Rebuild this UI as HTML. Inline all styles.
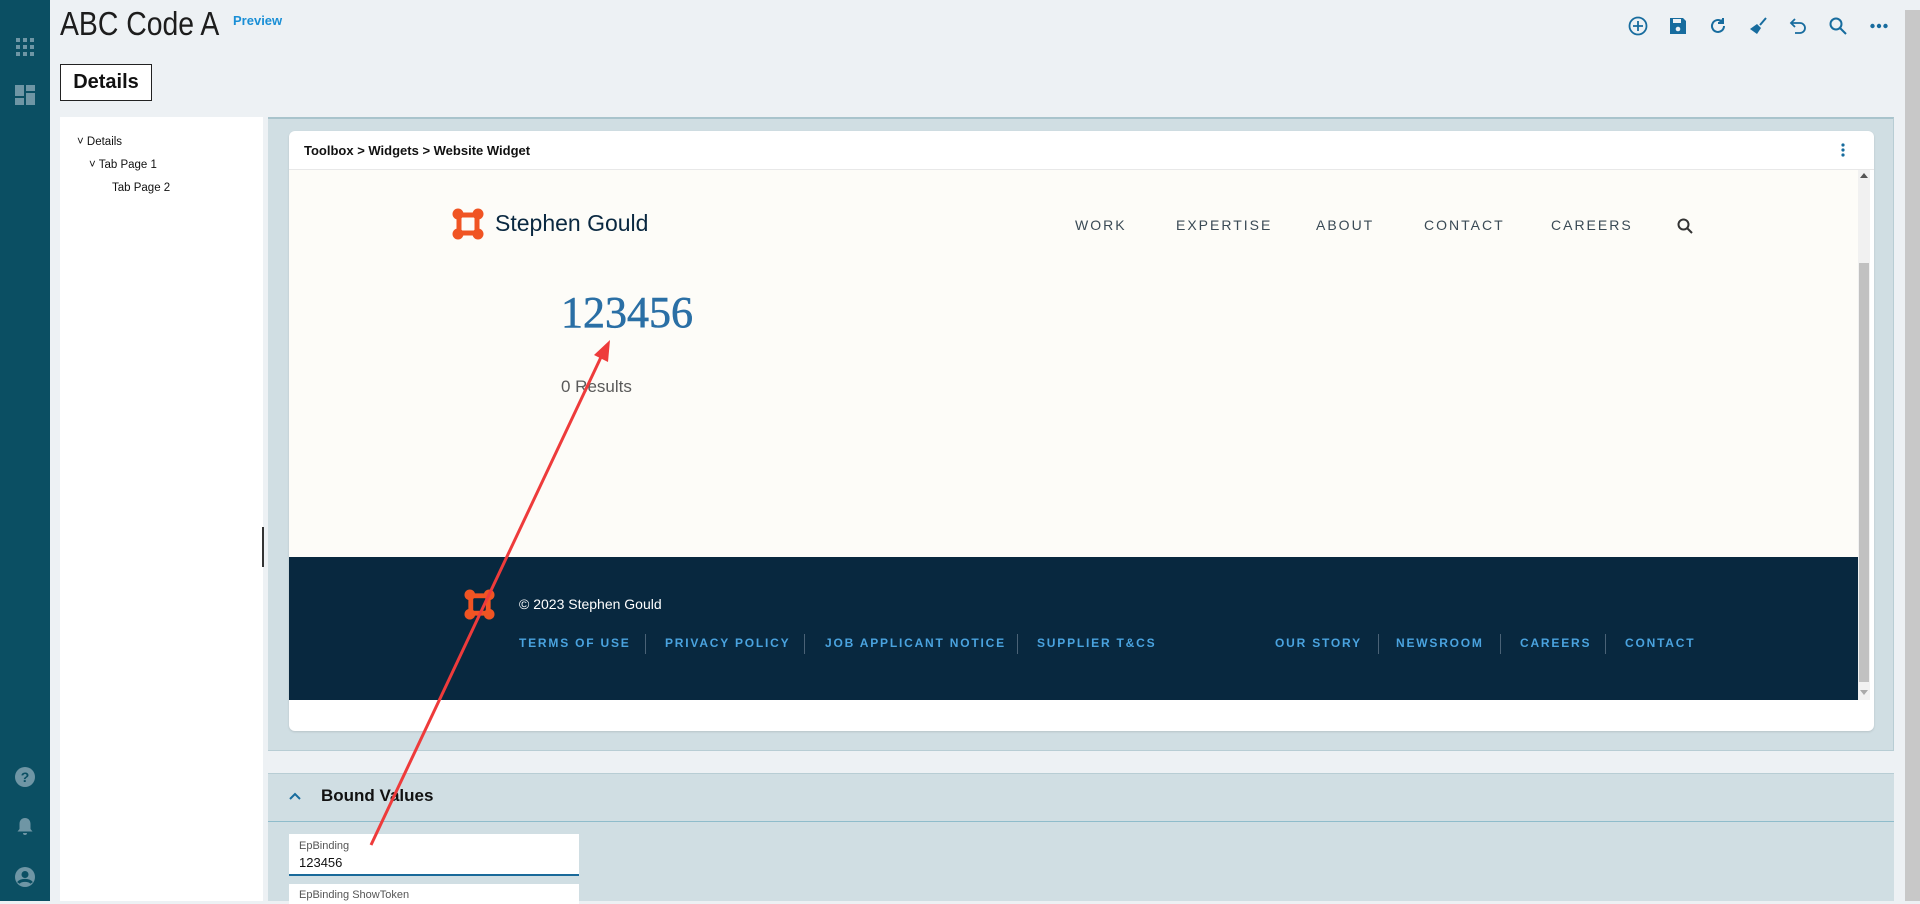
<!DOCTYPE html>
<html><head><meta charset="utf-8"><style>
*{margin:0;padding:0;box-sizing:border-box}
body{width:1920px;height:901px;overflow:hidden;background:#edf1f4;font-family:"Liberation Sans",sans-serif;position:relative}
.abs{position:absolute}
.side{left:0;top:0;width:50px;height:901px;background:#0b4f63}
.tb svg{position:absolute;top:16px;width:20px;height:20px}
.nav span{position:absolute;top:47px;font-size:14px;letter-spacing:2px;color:#3a4a55}
.fl span{position:absolute;top:636px;font-size:12px;font-weight:bold;letter-spacing:1.8px;color:#4aa3df}
.sep{position:absolute;top:634px;width:1px;height:20px;background:#4a6276}
</style></head><body>
<div class="abs side">
 <svg class="abs" style="left:15px;top:-8px" width="20" height="14"><rect x="2" y="0" width="5" height="5" fill="#6f96a5"/><rect x="12" y="0" width="5" height="5" fill="#6f96a5"/></svg>
 <svg class="abs" style="left:15px;top:37px" width="20" height="20" fill="#6f96a5"><rect x="1" y="1" width="4" height="4"/><rect x="8" y="1" width="4" height="4"/><rect x="15" y="1" width="4" height="4"/><rect x="1" y="8" width="4" height="4"/><rect x="8" y="8" width="4" height="4"/><rect x="15" y="8" width="4" height="4"/><rect x="1" y="15" width="4" height="4"/><rect x="8" y="15" width="4" height="4"/><rect x="15" y="15" width="4" height="4"/></svg>
 <svg class="abs" style="left:15px;top:85px" width="20" height="20" fill="#6f96a5"><rect x="0" y="0" width="9" height="11"/><rect x="11" y="0" width="9" height="6"/><rect x="11" y="8" width="9" height="12"/><rect x="0" y="13" width="9" height="7"/></svg>
 <svg class="abs" style="left:14px;top:766px" width="22" height="22"><circle cx="11" cy="11" r="10" fill="#6f96a5"/><text x="11" y="16" text-anchor="middle" font-size="14" font-weight="bold" fill="#0b4f63" font-family="Liberation Sans">?</text></svg>
 <svg class="abs" style="left:15px;top:816px" width="20" height="20" fill="#6f96a5"><path d="M10 2c-3.5 0-5.5 2.5-5.5 6v5L2.5 15.5h15L15.5 13V8c0-3.5-2-6-5.5-6zM8 17h4a2 2 0 0 1-4 0z"/></svg>
 <svg class="abs" style="left:14px;top:866px" width="22" height="22"><circle cx="11" cy="11" r="10" fill="#6f96a5"/><circle cx="11" cy="8.5" r="3.5" fill="#0b4f63"/><path d="M4.5 17c2-3.5 11-3.5 13 0" stroke="#0b4f63" stroke-width="3" fill="none"/></svg>
</div>
<div class="abs" style="left:60px;top:5px;font-size:33px;color:#1d1d1d;transform:scaleX(0.86);transform-origin:0 0;white-space:nowrap">ABC Code A</div>
<div class="abs" style="left:233px;top:13px;font-size:13px;font-weight:bold;color:#1a8fd6">Preview</div>
<div class="abs" style="left:60px;top:64px;width:92px;height:37px;border:1px solid #222;background:#fff;font-size:20px;font-weight:bold;color:#111;text-align:center;line-height:35px">Details</div>
<div class="tb">
 <svg style="left:1628px" viewBox="0 0 20 20" fill="none" stroke="#176c9e" stroke-width="1.8"><circle cx="10" cy="10" r="8.5"/><path d="M10 5v10M5 10h10"/></svg>
 <svg style="left:1668px" viewBox="0 0 20 20"><path d="M2 2h13l3 3v13H2z" fill="#176c9e"/><rect x="5" y="3" width="8" height="4" fill="#edf1f4"/><circle cx="10" cy="13" r="2.3" fill="#edf1f4"/></svg>
 <svg style="left:1708px" viewBox="0 0 20 20" fill="none" stroke="#176c9e" stroke-width="2"><path d="M16 10a6 6 0 1 1-2-4.5"/><path d="M15 2v5h-5" fill="#176c9e"/></svg>
 <svg style="left:1748px" viewBox="0 0 20 20"><path d="M18 2l-6 7" stroke="#176c9e" stroke-width="2"/><path d="M9 8l4 4-4 6-7-5z" fill="#176c9e"/></svg>
 <svg style="left:1788px" viewBox="0 0 20 20" fill="none" stroke="#176c9e" stroke-width="1.8"><path d="M4 7h8a5 5 0 0 1 0 10H7"/><path d="M7 3L3 7l4 4"/></svg>
 <svg style="left:1828px" viewBox="0 0 20 20" fill="none" stroke="#176c9e" stroke-width="2"><circle cx="8" cy="8" r="5.5"/><path d="M12 12l6 6"/></svg>
 <svg style="left:1869px" viewBox="0 0 20 20" fill="#176c9e"><circle cx="3.5" cy="10" r="2.2"/><circle cx="10" cy="10" r="2.2"/><circle cx="16.5" cy="10" r="2.2"/></svg>
</div>
<div class="abs" style="left:1905px;top:10px;width:15px;height:891px;background:#c8c8c8"></div>
<!-- tree -->
<div class="abs" style="left:60px;top:117px;width:203px;height:784px;background:#fff;font-size:11.5px;color:#111">
 <div class="abs" style="left:17px;top:19px">˅ Details</div>
 <div class="abs" style="left:29px;top:42px">˅ Tab Page 1</div>
 <div class="abs" style="left:52px;top:65px">Tab Page 2</div>
</div>
<div class="abs" style="left:262px;top:527px;width:2px;height:40px;background:#333"></div>
<!-- main panel -->
<div class="abs" style="left:268px;top:117px;width:1626px;height:634px;background:#d0dee3;border-top:2px solid #a9c4cc;border-right:1px solid #b8cdd4;border-bottom:1px solid #b8cdd4"></div>
<div class="abs" style="left:289px;top:131px;width:1585px;height:600px;background:#fff;border-radius:6px;box-shadow:0 1px 2px rgba(0,0,0,.12)">
 <div class="abs" style="left:15px;top:12px;font-size:13px;font-weight:bold;color:#111">Toolbox &gt; Widgets &gt; Website Widget</div>
 <svg class="abs" style="left:1551px;top:11px" width="6" height="16" fill="#176c9e"><circle cx="3" cy="3" r="1.6"/><circle cx="3" cy="8" r="1.6"/><circle cx="3" cy="13" r="1.6"/></svg>
 <div class="abs" style="left:0;top:38px;width:1585px;height:1px;background:#e8e8e8"></div>
</div>
<!-- iframe -->
<div class="abs" style="left:289px;top:170px;width:1569px;height:530px;background:#fdfcf8;overflow:hidden">
 <svg class="abs" style="left:163px;top:38px" width="32" height="32" viewBox="0 0 32 32"><rect x="7" y="7" width="18" height="18" fill="none" stroke="#f05423" stroke-width="5"/><circle cx="6" cy="6" r="5.5" fill="#f05423"/><circle cx="26" cy="6" r="5.5" fill="#f05423"/><circle cx="6" cy="26" r="5.5" fill="#f05423"/><circle cx="26" cy="26" r="5.5" fill="#f05423"/></svg>
 <div class="abs" style="left:206px;top:40px;font-size:23px;color:#0a2840">Stephen Gould</div>
 <div class="nav"><span style="left:786px">WORK</span><span style="left:887px">EXPERTISE</span><span style="left:1027px">ABOUT</span><span style="left:1135px">CONTACT</span><span style="left:1262px">CAREERS</span></div>
 <svg class="abs" style="left:1388px;top:48px" width="16" height="16" fill="none" stroke="#333" stroke-width="2"><circle cx="6.5" cy="6.5" r="5"/><path d="M10 10l5 5"/></svg>
 <div class="abs" style="left:272px;top:117px;font-family:'Liberation Serif',serif;font-size:44px;color:#2a6fa5;-webkit-text-stroke:0.6px #2a6fa5">123456</div>
 <div class="abs" style="left:272px;top:207px;font-size:17px;color:#5a5a5a">0 Results</div>
 <div class="abs" style="left:0;top:387px;width:1569px;height:143px;background:#08283f">
  <svg class="abs" style="left:175px;top:32px" width="31" height="31" viewBox="0 0 32 32"><rect x="7" y="7" width="18" height="18" fill="none" stroke="#f05423" stroke-width="5"/><circle cx="6" cy="6" r="5.5" fill="#f05423"/><circle cx="26" cy="6" r="5.5" fill="#f05423"/><circle cx="6" cy="26" r="5.5" fill="#f05423"/><circle cx="26" cy="26" r="5.5" fill="#f05423"/></svg>
  <div class="abs" style="left:230px;top:39px;font-size:14px;color:#fff">© 2023 Stephen Gould</div>
 </div>
</div>
<div class="fl">
 <span style="left:519px">TERMS OF USE</span><div class="sep" style="left:645px"></div>
 <span style="left:665px">PRIVACY POLICY</span><div class="sep" style="left:804px"></div>
 <span style="left:825px">JOB APPLICANT NOTICE</span><div class="sep" style="left:1017px"></div>
 <span style="left:1037px">SUPPLIER T&amp;CS</span>
 <span style="left:1275px">OUR STORY</span><div class="sep" style="left:1378px"></div>
 <span style="left:1396px">NEWSROOM</span><div class="sep" style="left:1500px"></div>
 <span style="left:1520px">CAREERS</span><div class="sep" style="left:1605px"></div>
 <span style="left:1625px">CONTACT</span>
</div>
<!-- iframe scrollbar -->
<div class="abs" style="left:1858px;top:170px;width:12px;height:530px;background:#f1f1f1"></div>
<div class="abs" style="left:1859px;top:263px;width:10px;height:419px;background:#c1c1c1"></div>
<div class="abs" style="left:1860px;top:173px;width:0;height:0;border-left:4px solid transparent;border-right:4px solid transparent;border-bottom:5px solid #555"></div>
<div class="abs" style="left:1860px;top:690px;width:0;height:0;border-left:4px solid transparent;border-right:4px solid transparent;border-top:5px solid #aaa"></div>
<!-- bound values -->
<div class="abs" style="left:268px;top:773px;width:1626px;height:128px;background:#d0dee3;border-top:1px solid #b8cdd4"></div>
<div class="abs" style="left:268px;top:821px;width:1626px;height:1px;background:#8fbccb"></div>
<svg class="abs" style="left:289px;top:791px" width="12" height="10" fill="none" stroke="#176c9e" stroke-width="2"><path d="M1 8l5-5 5 5"/></svg>
<div class="abs" style="left:321px;top:786px;font-size:17px;font-weight:bold;color:#111">Bound Values</div>
<div class="abs" style="left:289px;top:834px;width:290px;height:42px;background:#fff;border-bottom:2px solid #1a6a9a">
 <div class="abs" style="left:10px;top:6px;font-size:11px;color:#555">EpBinding</div>
 <div class="abs" style="left:10px;top:21px;font-size:13px;color:#111">123456</div>
</div>
<div class="abs" style="left:289px;top:884px;width:290px;height:20px;background:#fff">
 <div class="abs" style="left:10px;top:5px;font-size:11px;color:#555">EpBinding ShowToken</div>
</div>
<svg class="abs" style="left:0;top:0" width="1920" height="901"><line x1="371" y1="845" x2="602" y2="355" stroke="#ee3b3b" stroke-width="3"/><path d="M610 340l-2 22-14-7z" fill="#ee3b3b"/></svg>
</body></html>
